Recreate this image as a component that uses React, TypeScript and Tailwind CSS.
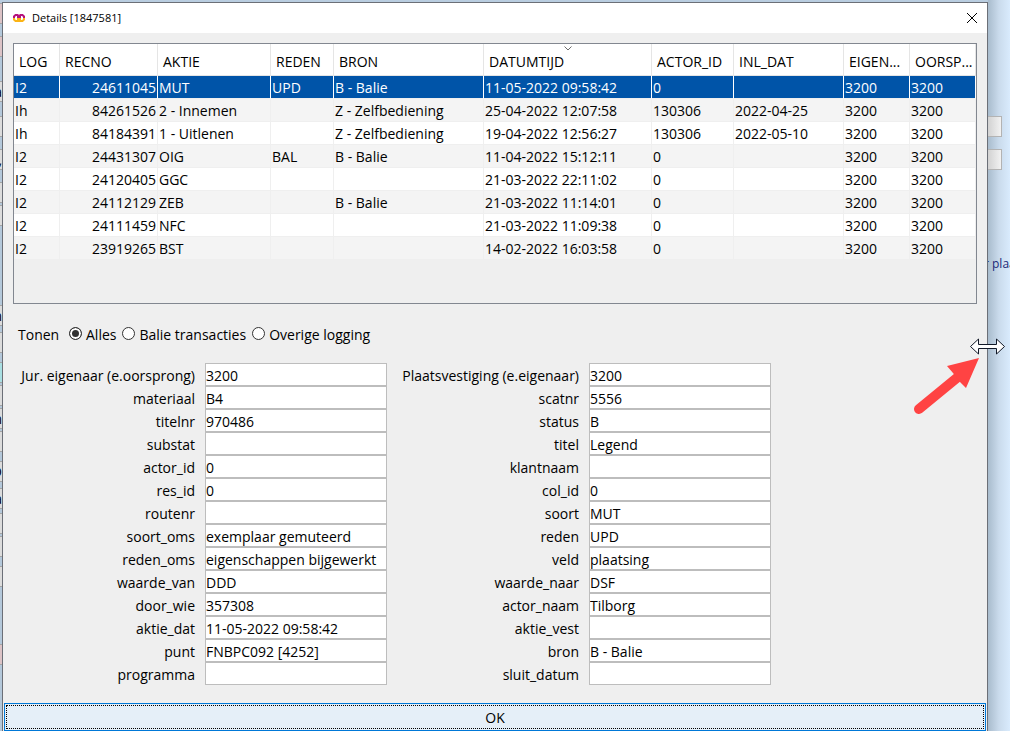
const font = "font-['Open_Sans',sans-serif]"

const columns = [
  { name: 'LOG', width: 'w-[46px]' },
  { name: 'RECNO', width: 'w-[98px]' },
  { name: 'AKTIE', width: 'w-[113px]' },
  { name: 'REDEN', width: 'w-[63px]' },
  { name: 'BRON', width: 'w-[150px]' },
  { name: 'DATUMTIJD', width: 'w-[168px]' },
  { name: 'ACTOR_ID', width: 'w-[82px]' },
  { name: 'INL_DAT', width: 'w-[110px]' },
  { name: 'EIGEN...', width: 'w-[66px]' },
  { name: 'OORSP...', width: 'w-[66px]' },
]

const rows = [
  ['I2', '24611045', 'MUT', 'UPD', 'B - Balie', '11-05-2022 09:58:42', '0', '', '3200', '3200'],
  ['Ih', '84261526', '2 - Innemen', '', 'Z - Zelfbediening', '25-04-2022 12:07:58', '130306', '2022-04-25', '3200', '3200'],
  ['Ih', '84184391', '1 - Uitlenen', '', 'Z - Zelfbediening', '19-04-2022 12:56:27', '130306', '2022-05-10', '3200', '3200'],
  ['I2', '24431307', 'OIG', 'BAL', 'B - Balie', '11-04-2022 15:12:11', '0', '', '3200', '3200'],
  ['I2', '24120405', 'GGC', '', '', '21-03-2022 22:11:02', '0', '', '3200', '3200'],
  ['I2', '24112129', 'ZEB', '', 'B - Balie', '21-03-2022 11:14:01', '0', '', '3200', '3200'],
  ['I2', '24111459', 'NFC', '', '', '21-03-2022 11:09:38', '0', '', '3200', '3200'],
  ['I2', '23919265', 'BST', '', '', '14-02-2022 16:03:58', '0', '', '3200', '3200'],
]

const leftFields = [
  ['Jur. eigenaar (e.oorsprong)', '3200'],
  ['materiaal', 'B4'],
  ['titelnr', '970486'],
  ['substat', ''],
  ['actor_id', '0'],
  ['res_id', '0'],
  ['routenr', ''],
  ['soort_oms', 'exemplaar gemuteerd'],
  ['reden_oms', 'eigenschappen bijgewerkt'],
  ['waarde_van', 'DDD'],
  ['door_wie', '357308'],
  ['aktie_dat', '11-05-2022 09:58:42'],
  ['punt', 'FNBPC092 [4252]'],
  ['programma', ''],
]

const rightFields = [
  ['Plaatsvestiging (e.eigenaar)', '3200'],
  ['scatnr', '5556'],
  ['status', 'B'],
  ['titel', 'Legend'],
  ['klantnaam', ''],
  ['col_id', '0'],
  ['soort', 'MUT'],
  ['reden', 'UPD'],
  ['veld', 'plaatsing'],
  ['waarde_naar', 'DSF'],
  ['actor_naam', 'Tilborg'],
  ['aktie_vest', ''],
  ['bron', 'B - Balie'],
  ['sluit_datum', ''],
]

// fields of the window behind the dialog, only their right edge shows
const behind = [
  { gap: 'mt-px', color: 'bg-[#dcc3c6]', text: '' },
  { gap: 'mt-3', color: 'bg-[#dcc3c6]', text: '' },
  { gap: 'mt-6', color: 'bg-[#dcdcdc]', text: 'a' },
  { gap: 'mt-[14px]', color: 'bg-[#dcdcdc]', text: '' },
  { gap: 'mt-3', color: 'bg-[#dcdcdc]', text: ',' },
  { gap: 'mt-3', color: 'bg-[#dcdcdc]', text: '' },
  { gap: 'mt-[2px]', color: 'bg-[#dcdcdc]', text: '' },
  { gap: 'mt-[79px]', color: 'bg-[#dcdcdc]', text: 'n' },
  { gap: 'mt-[6px]', color: 'bg-[#dcdcdc]', text: '' },
  { gap: 'mt-[9px]', color: 'bg-[#a9dfe2]', text: '' },
  { gap: 'mt-[2px]', color: 'bg-[#dcdcdc]', text: '' },
  { gap: 'mt-[2px]', color: 'bg-[#dcdcdc]', text: 'n' },
  { gap: 'mt-[2px]', color: 'bg-[#dcdcdc]', text: '' },
  { gap: 'mt-[9px]', color: 'bg-[#dcdcdc]', text: 'D' },
  { gap: 'mt-[6px]', color: 'bg-[#dcdcdc]', text: 'a' },
  { gap: 'mt-1', color: 'bg-[#dcdcdc]', text: '' },
  { gap: 'mt-[2px]', color: 'bg-[#dcdcdc]', text: '' },
  { gap: 'mt-[9px]', color: 'bg-[#dcdcdc]', text: '' },
  { gap: 'mt-[57px]', color: 'bg-[#dcc3c6]', text: '' },
]

function FieldColumn({ fields, labelWidth }: { fields: string[][]; labelWidth: string }) {
  return (
    <div className="flex flex-col">
      {fields.map(([label, value]) => (
        <div key={label} className="flex h-[23px] items-center gap-[10px]">
          <label htmlFor={label} className={`${labelWidth} whitespace-nowrap pt-[2px] text-right leading-5`}>
            {label}
          </label>
          <input
            id={label}
            defaultValue={value}
            className="h-[23px] w-[182px] border border-[#bdbdbd] bg-white pt-[2px] outline-none"
          />
        </div>
      ))}
    </div>
  )
}

function LogTable() {
  return (
    <div className="h-[261px] overflow-hidden border border-[#828790]">
      <table className="w-full table-fixed border-separate border-spacing-0">
        <thead>
          <tr className="h-8 bg-white">
            {columns.map((column) => (
              <th
                key={column.name}
                className={`${column.width} relative whitespace-nowrap border-b border-r border-[#e5e5e5] p-0 pl-[5px] pt-1 text-left font-normal`}
              >
                {column.name}
                {column.name === 'DATUMTIJD' && (
                  <svg className="absolute left-[80px] top-[2px]" width="8" height="5" viewBox="0 0 8 5" fill="none" stroke="#6d6d6d">
                    <path d="M0.5 0.5 L4 4 L7.5 0.5" />
                  </svg>
                )}
              </th>
            ))}
          </tr>
        </thead>
        <tbody>
          {rows.map((row, i) => (
            <tr
              key={row[1]}
              className={`h-[23px] ${i === 0 ? 'bg-[#0054a8] text-white' : i % 2 ? 'bg-[#f4f4f4]' : 'bg-white'}`}
            >
              {row.map((cell, j) => (
                <td
                  key={j}
                  className={`whitespace-nowrap border-b border-r border-b-[#efefef] p-0 px-px pt-[2px] leading-5 ${i === 0 ? 'border-r-white' : 'border-r-[#efefef]'} ${j === 1 ? 'text-right' : ''}`}
                >
                  {cell}
                </td>
              ))}
            </tr>
          ))}
        </tbody>
      </table>
    </div>
  )
}

function Filters() {
  return (
    <fieldset className="mt-5 flex h-[22px] items-center pl-[5px]">
      <span className="w-[51px]">Tonen</span>
      {['Alles', 'Balie transacties', 'Overige logging'].map((option) => (
        <label key={option} className="mr-[6px] flex items-center gap-1 whitespace-nowrap">
          <input
            type="radio"
            name="tonen"
            defaultChecked={option === 'Alles'}
            className="mb-[3px] size-[13px] appearance-none rounded-full border border-[#333] bg-white checked:bg-[#333] checked:shadow-[inset_0_0_0_2px_white]"
          />
          {option}
        </label>
      ))}
    </fieldset>
  )
}

export default function App() {
  return (
    <div className={`flex min-h-screen overflow-hidden bg-[#b9cde0] pt-[2px] text-sm text-black ${font}`}>
      <div className="w-[2px] overflow-hidden bg-[#b4c8da]" aria-hidden="true">
        {behind.map((field, i) => (
          <div
            key={i}
            className={`flex h-[21px] items-center justify-end overflow-hidden border-y border-[#a5a5a5] ${field.gap} ${field.color}`}
          >
            {field.text}
          </div>
        ))}
      </div>

      <div className="relative z-10 flex min-w-0 flex-1 flex-col border border-b-0 border-[#6b6f77] bg-[#efefef]">
        <header className="flex h-[30px] items-center bg-white pl-[10px] pr-[9px]">
          <svg width="12" height="8" viewBox="0 0 12 8" fill="none" strokeWidth="2">
            <path d="M1 4 V2.5 L2.5 1 H4.5 L6 2 L7.5 1 H9.5 L11 2.5 V4 M5 2 V4 M7 2 V4" stroke="#b5127d" />
            <path d="M1 4 V5.5 L2.5 7 H4.5 L6 6 L7.5 7 H9.5 L11 5.5 V4 M5 6 V4 M7 6 V4" stroke="#fbb416" />
          </svg>
          <h1 className="ml-[7px] flex-1 text-[11px]">Details [1847581]</h1>
          <button aria-label="Sluiten">
            <svg width="12" height="12" viewBox="0 0 12 12" stroke="#000">
              <path d="M1 1 L11 11 M11 1 L1 11" />
            </svg>
          </button>
        </header>

        <main className="flex-1 px-[10px] pt-[10px]">
          <LogTable />
          <Filters />
          <div className="mt-[17px] flex gap-[10px] pl-[5px]">
            <FieldColumn fields={leftFields} labelWidth="w-[177px]" />
            <FieldColumn fields={rightFields} labelWidth="w-[182px]" />
          </div>
        </main>

        <button className="mx-px h-7 border border-[#0078d7] bg-[#e5eff8] p-px">
          <span className="flex h-full items-center justify-center border border-dotted border-black pt-[2px]">OK</span>
        </button>

        {/* resize pointer with its arrow */}
        <svg className="absolute -right-[19px] top-[333px]" width="92" height="80" viewBox="0 0 92 80">
          <path d="M5 73 L44 41" stroke="#ff4343" strokeWidth="10" strokeLinecap="round" />
          <path d="M65 22 L33 30 L39 37 L46 46 L52 52 Z" fill="#ff4343" />
          <path
            d="M56.5 10.5 L64.5 3 V8.5 H82.5 V3 L90.5 10.5 L82.5 18 V12.5 H64.5 V18 Z"
            fill="#fff"
            stroke="#111827"
          />
        </svg>
      </div>

      <div className="-mt-[2px] w-[22px] overflow-hidden bg-linear-to-r from-[#a9bccd] via-[#cadbec] to-[#d9ebfd] pt-[116px]">
        <div className="h-[21px] w-[14px] border border-l-0 border-[#b3b3b3] bg-linear-to-r from-[#d2d2d2] to-[#f2f2f2]" />
        <div className="mt-3 h-[21px] w-[14px] border border-l-0 border-[#b3b3b3] bg-linear-to-r from-[#d2d2d2] to-[#f2f2f2]" />
        <div className="-ml-1 mt-[86px] whitespace-nowrap text-xs text-[#1b2a78]">r plaats</div>
      </div>
    </div>
  )
}
